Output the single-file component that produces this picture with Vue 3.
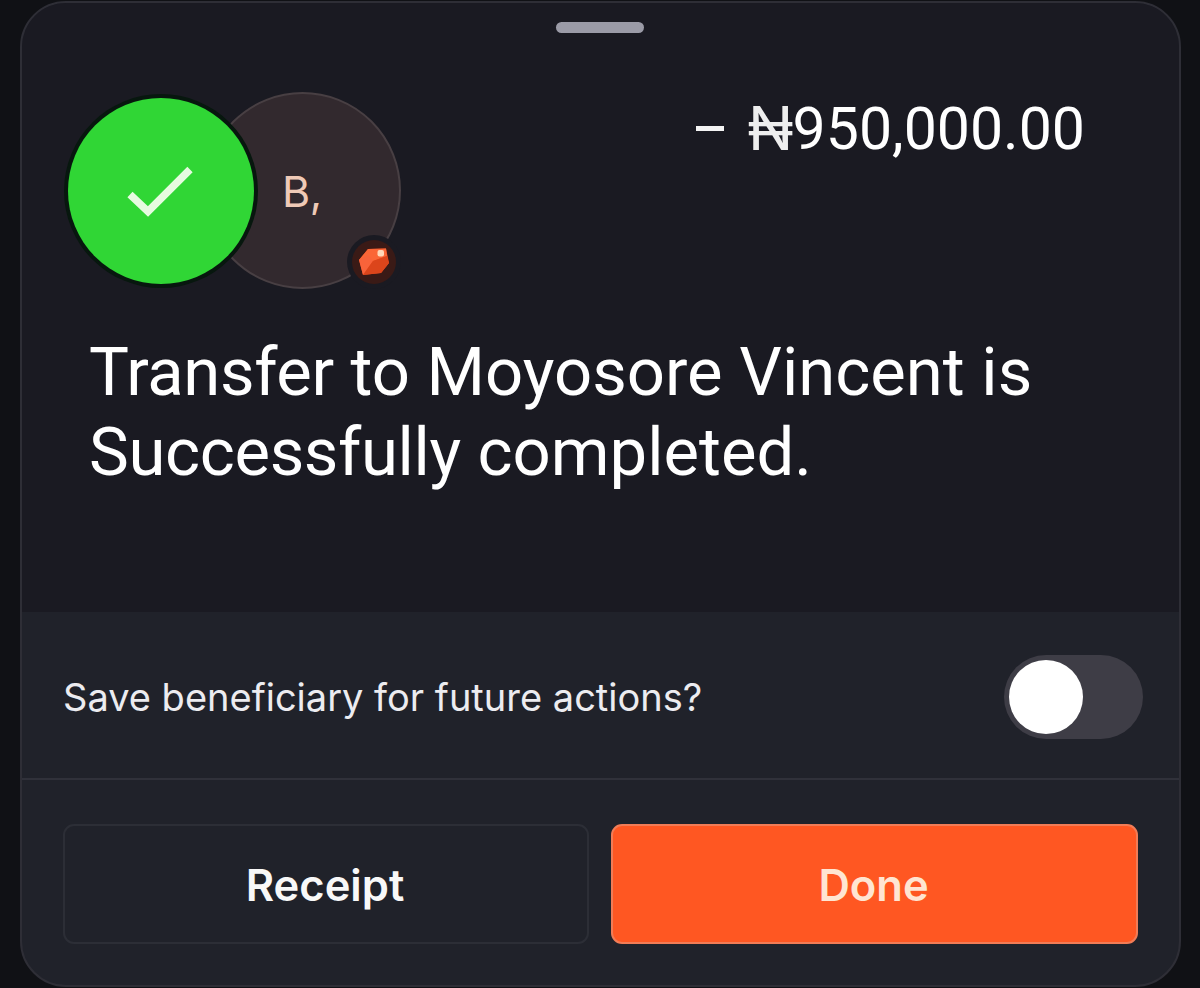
<template>
  <main class="screen">
    <section class="sheet">
      <div class="summary">
        <div class="handle"></div>
        <div class="summary-header">
          <div class="avatars">
            <div class="status">
              <svg width="186" height="186" viewBox="0 0 186 186">
                <path d="M62 96.500L80 113.500L122 71.500" fill="none" stroke="#e6fbe0" stroke-width="7.500" />
              </svg>
            </div>
            <div class="recipient">
              <span class="initials">{{ transfer.initials }}</span>
              <div class="bank">
                <svg width="34" height="34" viewBox="0 0 34 34">
                  <path d="M11 4L29 3.500L32 18L24 28L6 30L2 15Z" fill="#e94a1d" />
                  <path d="M11 4L29 3.500L30 11L16 16L2 15Z" fill="#fb6636" />
                  <path d="M2 15L11 10L16 16L6 30Z" fill="#f9633a" />
                  <path d="M16 16L30 11L32 18L24 28L6 30Z" fill="#dc451b" />
                  <rect x="20.500" y="5" width="6.500" height="6.500" rx="2" fill="#ffd8b8" />
                </svg>
              </div>
            </div>
          </div>
          <p class="amount">
            <span class="minus"></span>
            <span class="currency">₦</span>
            <span class="value">{{ transfer.amount }}</span>
          </p>
        </div>
        <h1 class="title">
          <span class="title-line"><span class="tight">Transfer</span> to {{ transfer.name }} is</span>
          <span class="title-line"><span class="tight">Successfully</span> completed.</span>
        </h1>
      </div>
      <div class="beneficiary">
        <span class="beneficiary-label">Save beneficiary for future actions?</span>
        <button
          :class="['toggle', { active: saveBeneficiary }]"
          role="switch"
          :aria-checked="saveBeneficiary"
          @click="toggleBeneficiary"
        >
          <span class="knob"></span>
        </button>
      </div>
      <div class="actions">
        <button class="action receipt"><span>Receipt</span></button>
        <button class="action done"><span>Done</span></button>
      </div>
    </section>
  </main>
</template>

<script setup>
import { ref } from 'vue';

const transfer = {
  name: 'Moyosore Vincent',
  initials: 'B,',
  amount: '950,000.00',
};

const saveBeneficiary = ref(false);

const toggleBeneficiary = () => saveBeneficiary.value = !saveBeneficiary.value;
</script>

<style>
body {
  margin: 0;
  background: #101115;
}
</style>

<style scoped>
.screen {
  box-sizing: border-box;
  width: 1200px;
  height: 988px;
  padding: 1px 19px 0 20px;
  overflow: hidden;
  background: #101115;
  font-family: Inter, "Liberation Sans", sans-serif;
}

.sheet {
  box-sizing: border-box;
  display: flex;
  flex-direction: column;
  height: 986px;
  border: 2px solid #2e2e36;
  border-radius: 46px;
  overflow: hidden;
  background: #20222a;
}

.summary {
  box-sizing: border-box;
  flex-shrink: 0;
  height: 609px;
  padding: 19px 40px 0 46px;
  background: #1a1a22;
}

.handle {
  width: 88px;
  height: 11px;
  margin: 0 auto 0 488px;
  border-radius: 6px;
  background: #9b9ba7;
}

.summary-header {
  display: flex;
  justify-content: space-between;
  margin-top: 59px;
  padding-right: 54px;
}

.avatars {
  display: flex;
  align-items: center;
  height: 197px;
}

.status {
  z-index: 1;
  width: 186px;
  height: 186px;
  border-radius: 50%;
  background: #30d635;
  box-shadow: 0 0 0 4px #07170e;
}

.status svg {
  display: block;
}

.recipient {
  position: relative;
  box-sizing: border-box;
  display: flex;
  align-items: center;
  width: 197px;
  height: 197px;
  margin-left: -50px;
  border: 2px solid #483f43;
  border-radius: 50%;
  background: #32292e;
}

.initials {
  margin-left: 76px;
  color: #efc9b6;
  font-size: 43px;
  letter-spacing: -0.5px;
}

.bank {
  position: absolute;
  right: 3px;
  bottom: 3px;
  display: flex;
  align-items: center;
  justify-content: center;
  width: 44px;
  height: 44px;
  border-radius: 50%;
  background: #3a1a16;
  box-shadow: 0 0 0 5px #1a1a22;
}

.amount {
  display: flex;
  align-items: center;
  height: 72px;
  margin: 0;
  color: #fff;
}

.minus {
  width: 28px;
  height: 5px;
  margin-right: 23px;
  background: #f4f4f4;
}

.currency {
  margin-right: -1px;
  color: #eee;
  font-size: 60px;
}

.value {
  font-family: Roboto, "Liberation Sans", sans-serif;
  font-size: 59px;
}

.title {
  margin: 43px 0 0 21px;
  color: #fff;
  font-family: Roboto, "Liberation Sans", sans-serif;
  font-size: 67px;
  font-weight: 400;
  line-height: 80px;
  white-space: nowrap;
}

.title-line {
  display: block;
}

.tight {
  letter-spacing: -0.35px;
}

.beneficiary {
  box-sizing: border-box;
  display: flex;
  flex-shrink: 0;
  align-items: center;
  justify-content: space-between;
  height: 168px;
  padding: 4px 36px 0 41px;
  border-bottom: 2px solid #30313a;
}

.beneficiary-label {
  color: #ececf0;
  font-size: 38px;
}

.toggle {
  display: flex;
  align-items: center;
  width: 139px;
  height: 84px;
  padding: 0 5px;
  border: 0;
  border-radius: 42px;
  background: #3e3d46;
}

.toggle.active {
  justify-content: flex-end;
  background: #30d635;
}

.knob {
  width: 74px;
  height: 74px;
  border-radius: 50%;
  background: #fff;
}

.actions {
  display: grid;
  grid-template-columns: 526px 527px;
  gap: 22px;
  padding: 44px 41px 0;
}

.action {
  box-sizing: border-box;
  height: 120px;
  padding: 2px 2px 0 0;
  border: 2px solid #2c2e36;
  border-radius: 11px;
  font-family: inherit;
  font-size: 43.5px;
  font-weight: 600;
}

.receipt {
  background: #20222a;
  color: #f8f8f8;
}

.done {
  border-color: #f27c56;
  background: #ff5722;
  color: #ffe5d2;
}
</style>
